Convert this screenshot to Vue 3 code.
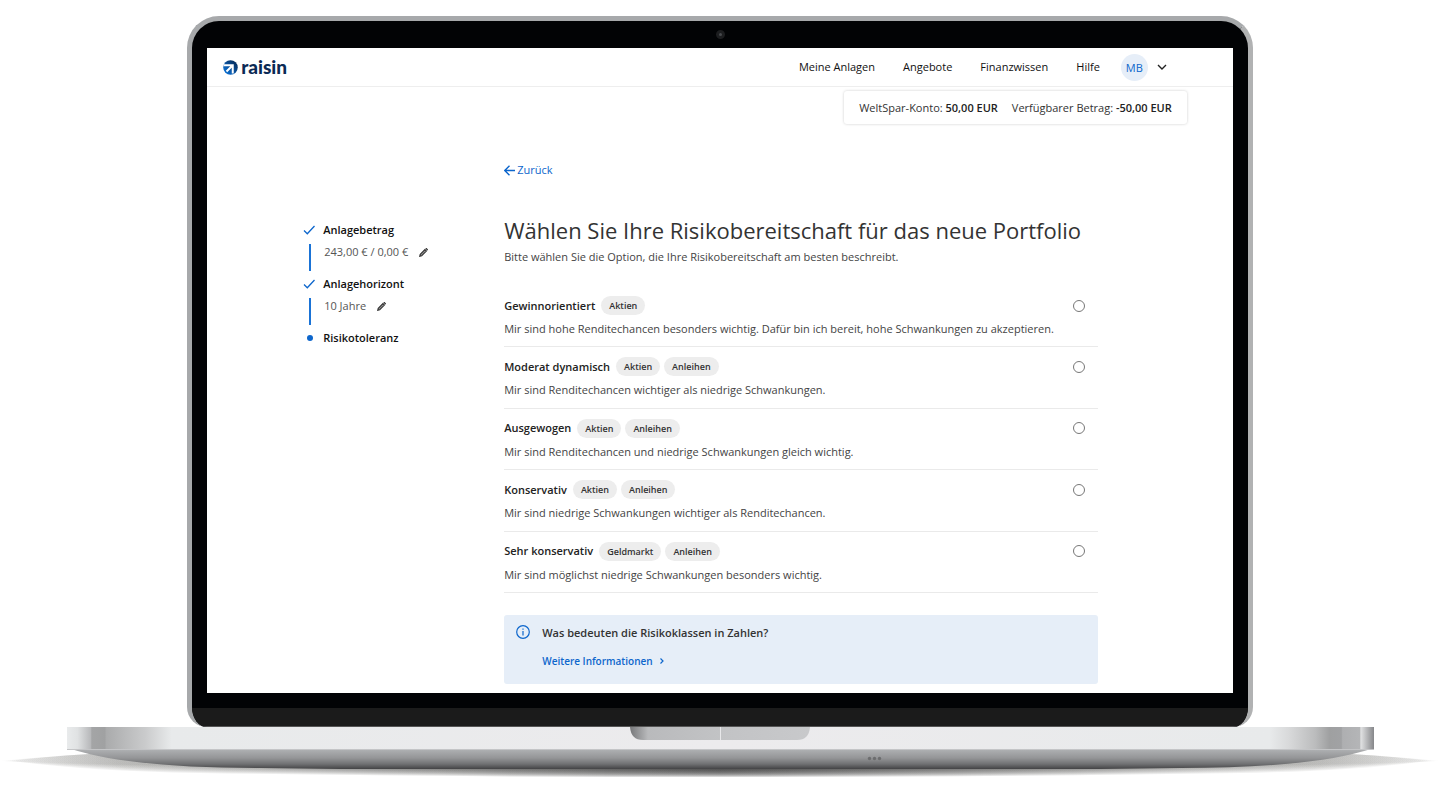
<template>
    <div class="laptop">
        <div class="lid">
            <div class="camera-row">
                <span class="camera"></span>
            </div>

            <div class="screen">
                <header class="header">
                    <a href="#" class="logo">
                        <svg viewBox="0 0 30 30" class="logo-icon" aria-hidden="true">
                            <defs>
                                <linearGradient id="logoShade" x1="0" y1="1" x2="0.9" y2="0.1">
                                    <stop offset="0" stop-color="#0a7ae6" />
                                    <stop offset="0.400" stop-color="#0a5cb0" />
                                    <stop offset="1" stop-color="#062a57" />
                                </linearGradient>
                            </defs>
                            <circle cx="15" cy="15" r="14.500" fill="url(#logoShade)" />
                            <path d="M1 10.500H19.500V27M19 11L7 23" stroke="#fff" stroke-width="4" />
                        </svg>
                        <span class="logo-text">raisin</span>
                    </a>
                    <nav class="nav">
                        <a v-for="link in navLinks" :key="link" href="#" class="nav-link">{{ link }}</a>
                    </nav>
                    <button type="button" class="account" aria-label="Konto MB">
                        <span class="avatar">MB</span>
                        <svg viewBox="0 0 10 10" class="chevron" aria-hidden="true">
                            <path d="M1 3L5 7L9 3" />
                        </svg>
                    </button>
                </header>

                <div class="balance">
                    <span>WeltSpar-Konto: <strong>50,00 EUR</strong></span>
                    <span>Verfügbarer Betrag: <strong>-50,00 EUR</strong></span>
                </div>

                <div class="content">
                    <aside>
                        <ol class="steps">
                            <li v-for="step in steps" :key="step.label" class="step">
                                <div class="step-head">
                                    <svg v-if="step.value" viewBox="0 0 12 10" class="check" aria-hidden="true">
                                        <path d="M1 5.500L4.300 8.700L11.500 1" />
                                    </svg>
                                    <span v-else class="dot"></span>
                                    <span>{{ step.label }}</span>
                                </div>
                                <div v-if="step.value" class="step-body">
                                    <span>{{ step.value }}</span>
                                    <button type="button" class="edit" :aria-label="step.label + ' bearbeiten'">
                                        <svg viewBox="0 0 10 10" aria-hidden="true">
                                            <path d="M.8 9.200L1.400 7L6.600 1.800L8.200 3.400L3 8.600Z" />
                                            <path d="M7.400 1L8.200 .6L9.400 1.800L9 2.600" />
                                        </svg>
                                    </button>
                                </div>
                            </li>
                        </ol>
                    </aside>

                    <main>
                        <a href="#" class="back">
                            <svg viewBox="0 0 12 12" aria-hidden="true">
                                <path d="M12 6H1.500M6 .8L.8 6L6 11.200" />
                            </svg>
                            <span>Zurück</span>
                        </a>
                        <h1 class="title">Wählen Sie Ihre Risikobereitschaft für das neue Portfolio</h1>
                        <p class="intro">Bitte wählen Sie die Option, die Ihre Risikobereitschaft am besten beschreibt.</p>

                        <div class="options" role="radiogroup" aria-label="Risikobereitschaft">
                            <label v-for="option in options" :key="option.id" class="option">
                                <span class="option-head">
                                    <span class="option-name">{{ option.name }}</span>
                                    <span v-for="tag in option.tags" :key="tag" class="tag">{{ tag }}</span>
                                    <input v-model="selected" type="radio" name="risk" :value="option.id" class="radio">
                                </span>
                                <span class="option-text">{{ option.text }}</span>
                            </label>
                        </div>

                        <section class="info">
                            <svg viewBox="0 0 14 14" class="info-icon" aria-hidden="true">
                                <circle cx="7" cy="7" r="6.300" />
                                <path d="M7 6V10.500M7 3.500V4.800" />
                            </svg>
                            <div>
                                <h2 class="info-title">Was bedeuten die Risikoklassen in Zahlen?</h2>
                                <a href="#" class="info-link">
                                    <span>Weitere Informationen</span>
                                    <svg viewBox="0 0 6 8" aria-hidden="true">
                                        <path d="M1.500 1.500L4 4L1.500 6.500" />
                                    </svg>
                                </a>
                            </div>
                        </section>
                    </main>
                </div>
            </div>

            <div class="chin"></div>
        </div>

        <!-- Laptop base and shadow -->
        <svg viewBox="0 0 1440 60" class="base" aria-hidden="true">
            <defs>
                <linearGradient id="edge">
                    <stop offset="0" stop-color="#e9ebec" />
                    <stop offset="0.008" stop-color="#e0e2e3" />
                    <stop offset="0.018" stop-color="#b8b9bb" />
                    <stop offset="0.019" stop-color="#a4a5a6" />
                    <stop offset="0.029" stop-color="#a0a1a2" />
                    <stop offset="0.030" stop-color="#aaabac" />
                    <stop offset="0.060" stop-color="#cacbcc" />
                    <stop offset="0.080" stop-color="#e8eaeb" />
                    <stop offset="0.500" stop-color="#ecebed" />
                    <stop offset="0.920" stop-color="#e8eaeb" />
                    <stop offset="0.935" stop-color="#d8d9da" />
                    <stop offset="0.955" stop-color="#bbbcbd" />
                    <stop offset="0.966" stop-color="#9fa0a1" />
                    <stop offset="0.975" stop-color="#a1a2a4" />
                    <stop offset="0.976" stop-color="#aeafb1" />
                    <stop offset="0.989" stop-color="#b4b5b7" />
                    <stop offset="0.990" stop-color="#e0e1e2" />
                    <stop offset="1" stop-color="#86878a" />
                </linearGradient>
                <linearGradient id="under" x1="0" y1="0" x2="0" y2="1">
                    <stop offset="0" stop-color="#b0b2b4" />
                    <stop offset="0.450" stop-color="#949597" />
                    <stop offset="0.750" stop-color="#707173" />
                    <stop offset="1" stop-color="#434345" />
                </linearGradient>
                <linearGradient id="notch">
                    <stop offset="0" stop-color="#77787a" />
                    <stop offset="0.100" stop-color="#b9babc" />
                    <stop offset="0.500" stop-color="#c2c3c5" />
                    <stop offset="1" stop-color="#c8c9cb" />
                </linearGradient>
                <linearGradient id="shadow">
                    <stop offset="0" stop-color="#888885" stop-opacity="0.020" />
                    <stop offset="0.080" stop-color="#888885" stop-opacity="0.100" />
                    <stop offset="0.250" stop-color="#60605e" stop-opacity="0.140" />
                    <stop offset="0.500" stop-color="#3c3c3c" stop-opacity="0.220" />
                    <stop offset="0.750" stop-color="#60605e" stop-opacity="0.140" />
                    <stop offset="0.920" stop-color="#888885" stop-opacity="0.100" />
                    <stop offset="1" stop-color="#888885" stop-opacity="0.020" />
                </linearGradient>
            </defs>
            <path v-for="layer in shadowLayers" :key="layer" :d="layer" fill="url(#shadow)" />
            <path d="M71 22H1371Q1311 41 1180 41L1100 42H340L260 41Q130 41 71 22Z" fill="url(#under)" />
            <rect x="67" y="0" width="1307" height="22" fill="url(#edge)" />
            <rect x="67" y="22" width="1307" height="1" fill="#c4c5c7" />
            <path d="M630 0H810Q809 13 797 13H643Q631 13 630 0Z" fill="url(#notch)" />
            <rect x="720" y="0" width="1" height="13" fill="#e8e8ea" />
            <circle cx="869.500" cy="31.500" r="1.700" fill="#6c6d6f" />
            <circle cx="874.500" cy="31.500" r="1.700" fill="#6c6d6f" />
            <circle cx="879.500" cy="31.500" r="1.700" fill="#6c6d6f" />
        </svg>
    </div>
</template>

<script setup>
import { ref } from 'vue';

const selected = ref(null);

const navLinks = ['Meine Anlagen', 'Angebote', 'Finanzwissen', 'Hilfe'];

const steps = [
    { label: 'Anlagebetrag', value: '243,00 € / 0,00 €' },
    { label: 'Anlagehorizont', value: '10 Jahre' },
    { label: 'Risikotoleranz', value: '' }
];

const options = [
    {
        id: 'profit',
        name: 'Gewinnorientiert',
        tags: ['Aktien'],
        text: 'Mir sind hohe Renditechancen besonders wichtig. Dafür bin ich bereit, hohe Schwankungen zu akzeptieren.'
    },
    {
        id: 'dynamic',
        name: 'Moderat dynamisch',
        tags: ['Aktien', 'Anleihen'],
        text: 'Mir sind Renditechancen wichtiger als niedrige Schwankungen.'
    },
    {
        id: 'balanced',
        name: 'Ausgewogen',
        tags: ['Aktien', 'Anleihen'],
        text: 'Mir sind Renditechancen und niedrige Schwankungen gleich wichtig.'
    },
    {
        id: 'conservative',
        name: 'Konservativ',
        tags: ['Aktien', 'Anleihen'],
        text: 'Mir sind niedrige Schwankungen wichtiger als Renditechancen.'
    },
    {
        id: 'very-conservative',
        name: 'Sehr konservativ',
        tags: ['Geldmarkt', 'Anleihen'],
        text: 'Mir sind möglichst niedrige Schwankungen besonders wichtig.'
    }
];

// Stacked outlines, each a bit deeper, so the shadow fades downwards
const shadowLayers = [0, 1, 2, 3, 4, 5, 6, 7].map((i) => {
    const side = 37 + i;
    const bottom = 43 + i;
    return `M${i * 2} 34Q40 30 90 27H1350Q1400 30 ${1440 - i * 2} 34Q1360 ${side} 1240 ${side + 2}Q1000 ${bottom} 720 ${bottom}Q440 ${bottom} 200 ${side + 2}Q80 ${side} ${i * 2} 34Z`;
});
</script>

<style>
body {
    margin: 0;
    background: #fff;
}
</style>

<style scoped>
.laptop {
    padding-top: 16px;
    font-family: "Open Sans", "Noto Sans", sans-serif;
    font-size: 11px;
    line-height: 16px;
    color: #333;
}

a {
    color: inherit;
    text-decoration: none;
}

button {
    padding: 0;
    border: 0;
    background: none;
    font: inherit;
    cursor: pointer;
}

svg {
    display: block;
    fill: none;
}

/* Lid */
.lid {
    margin: 0 13%;
    border: 5px solid #a7a9ab;
    border-right-color: #b1b2b3;
    border-bottom: 0;
    border-radius: 32px 32px 20px 20px;
    background: #020305;
    overflow: hidden;
}

.camera-row {
    display: flex;
    align-items: center;
    justify-content: center;
    height: 27px;
}

.camera {
    width: 3px;
    height: 3px;
    border: 3px solid #1c1d1f;
    border-radius: 50%;
    background: #46484c;
}

.screen {
    margin: 0 15px;
    padding-bottom: 9px;
    background: #fff;
}

.chin {
    height: 18px;
    margin-top: 15px;
    border-bottom: 1px solid #555;
    background: #1b1b1b;
}

/* Header */
.header {
    display: flex;
    align-items: center;
    height: 38px;
    padding: 0 66px 0 16px;
    border-bottom: 1px solid #eee;
}

.logo {
    display: flex;
    align-items: center;
    gap: 3px;
    margin-right: auto;
    color: #0b2a55;
}

.logo-icon {
    width: 15px;
    height: 15px;
}

.logo-text {
    font-family: Lato, sans-serif;
    font-size: 19px;
    font-weight: 900;
    line-height: 20px;
}

.nav {
    display: flex;
    gap: 28px;
}

.nav-link {
    color: #111;
    font-weight: 500;
}

.account {
    display: flex;
    align-items: center;
    gap: 9px;
    margin-left: 21px;
}

.avatar {
    width: 27px;
    border-radius: 50%;
    background: #e6eef8;
    color: #0d66cc;
    line-height: 27px;
}

.chevron {
    width: 10px;
    height: 10px;
    stroke: #222;
    stroke-width: 1.4;
}

/* Account balance */
.balance {
    display: flex;
    gap: 14px;
    width: fit-content;
    margin: 4px 46px 0 auto;
    padding: 9px 15px 8px;
    border-radius: 3px;
    box-shadow: 0 0 3px rgba(0, 0, 0, 0.2);
}

.balance strong {
    color: #222;
    font-weight: 600;
}

/* Content */
.content {
    display: grid;
    grid-template-columns: 201px 1fr;
    padding: 38px 135px 0 96px;
}

.steps {
    margin: 60px 0 0;
    padding: 0;
    list-style: none;
}

.step {
    min-height: 54px;
}

.step-head {
    display: flex;
    align-items: center;
    gap: 8px;
    color: #111;
    font-weight: 600;
}

.check {
    width: 12px;
    height: 10px;
    stroke: #0d66cc;
    stroke-width: 1.3;
}

.dot {
    width: 6px;
    height: 6px;
    margin: 0 2px 0 4px;
    border-radius: 50%;
    background: #0d66cc;
}

.step-body {
    display: flex;
    align-items: center;
    gap: 11px;
    height: 16px;
    margin: 6px 0 0 6px;
    padding: 0 0 11px 13px;
    border-left: 2px solid #1a73d6;
    color: #555;
}

.edit svg {
    width: 9px;
    height: 9px;
    fill: #999;
    stroke: #333;
    stroke-width: 1.2;
}

.back {
    display: flex;
    align-items: center;
    gap: 2px;
    width: fit-content;
    color: #0d66cc;
}

.back svg {
    width: 11px;
    height: 11px;
    stroke: #0d66cc;
    stroke-width: 1.5;
}

.title {
    margin: 37px 0 0;
    color: #333;
    font-size: 22px;
    font-weight: 400;
    line-height: 30px;
}

.intro {
    margin: 4px 0 0;
    color: #444;
}

/* Risk options */
.options {
    display: grid;
    grid-auto-rows: 1fr;
    min-height: 307px;
    margin-top: 21px;
}

.option {
    display: flex;
    flex-direction: column;
    gap: 6px;
    padding-top: 10px;
    border-bottom: 1px solid #eaeaea;
    cursor: pointer;
}

.option-head {
    display: flex;
    align-items: center;
    gap: 4px;
    padding-right: 13px;
}

.option-name {
    margin-right: 2px;
    color: #222;
    font-weight: 600;
}

.tag {
    padding: 0 8px;
    border-radius: 10px;
    background: #ededed;
    font-size: 9px;
    font-weight: 600;
    line-height: 19px;
}

.radio {
    width: 12px;
    height: 12px;
    margin: 0 0 0 auto;
    border: 1px solid #777;
    border-radius: 50%;
    background: #fff;
    appearance: none;
}

.radio:checked {
    border: 4px solid #0d66cc;
}

.option-text {
    color: #444;
}

/* Info box */
.info {
    display: flex;
    gap: 12px;
    margin-top: 22px;
    padding: 10px 12px 15px;
    border-radius: 3px;
    background: #e6eef8;
}

.info-icon {
    width: 14px;
    height: 14px;
    stroke: #0d66cc;
    stroke-width: 1.2;
}

.info-title {
    margin: 0;
    font-size: 11px;
    font-weight: 600;
}

.info-link {
    display: flex;
    align-items: center;
    gap: 6px;
    margin-top: 12px;
    color: #0d66cc;
    font-size: 10px;
    font-weight: 600;
}

.info-link svg {
    width: 6px;
    height: 8px;
    stroke: #0d66cc;
    stroke-width: 1.2;
}

.base {
    width: 100%;
}
</style>
